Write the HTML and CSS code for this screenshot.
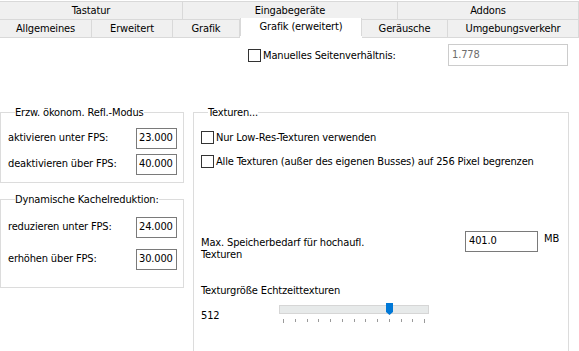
FILE: index.html
```html
<!DOCTYPE html>
<html lang="de">
  <head>
    <meta charset="UTF-8" />
    <title>Grafik (erweitert)</title>
    <link rel="stylesheet" href="styles.css">
  </head>
  <body>
    <div class="tabs">
      <div class="tab-row">
        <div class="tab w183">Tastatur</div>
        <div class="tab w215">Eingabegeräte</div>
        <div class="tab w181">Addons</div>
      </div>
      <div class="tab-row">
        <div class="tab w92">Allgemeines</div>
        <div class="tab w81">Erweitert</div>
        <div class="tab w67">Grafik</div>
        <div class="tab w122 active">Grafik (erweitert)</div>
        <div class="tab w86">Geräusche</div>
        <div class="tab w131">Umgebungsverkehr</div>
      </div>
    </div>

    <div class="page">
      <div class="top-row">
        <label class="check"><span class="box"></span>Manuelles Seitenverhältnis:</label>
        <div class="input disabled wide">1.778</div>
      </div>

      <div class="columns">
        <div class="left">
          <fieldset class="group refl">
            <legend>Erzw. ökonom. Refl.-Modus</legend>
            <div class="field">
              <span>aktivieren unter FPS:</span>
              <div class="input num">23.000</div>
            </div>
            <div class="field">
              <span>deaktivieren über FPS:</span>
              <div class="input num">40.000</div>
            </div>
          </fieldset>

          <fieldset class="group tiles">
            <legend>Dynamische Kachelreduktion:</legend>
            <div class="field">
              <span>reduzieren unter FPS:</span>
              <div class="input num">24.000</div>
            </div>
            <div class="field">
              <span>erhöhen über FPS:</span>
              <div class="input num">30.000</div>
            </div>
          </fieldset>
        </div>

        <fieldset class="group textures">
          <legend>Texturen...</legend>
          <label class="check"><span class="box"></span>Nur Low-Res-Texturen verwenden</label>
          <label class="check"><span class="box"></span>Alle Texturen (außer des eigenen Busses) auf 256 Pixel begrenzen</label>

          <div class="memory">
            <span class="memory-label">Max. Speicherbedarf für hochaufl.<br>Texturen</span>
            <div class="input mem">401.0</div>
            <span class="unit">MB</span>
          </div>

          <div class="realtime">Texturgröße Echtzeittexturen</div>
          <div class="slider-row">
            <span class="value">512</span>
            <div class="slider">
              <div class="track"></div>
              <div class="thumb"></div>
              <div class="ticks">
                <i class="long"></i><i></i><i></i><i></i><i></i><i></i><i></i><i></i><i></i><i></i><i></i><i></i><i class="long"></i>
              </div>
            </div>
          </div>
        </fieldset>
      </div>
    </div>
  </body>
</html>
```

FILE: styles.css
```css
body {
  margin: 0;
  background: #fff;
  font-family: "DejaVu Sans Condensed", "Liberation Sans", sans-serif;
  font-size: 11px;
  letter-spacing: -0.15px;
  color: #000;
  overflow: hidden;
}
.tabs {
  padding-top: 1px;
  background: #fff;
}
.tab-row {
  display: flex;
}
.tab {
  flex: none;
  box-sizing: border-box;
  height: 19px;
  line-height: 17px;
  text-align: center;
  background: #f0f0f0;
  border: 1px solid #d9d9d9;
  border-left: none;
  color: #000;
  white-space: nowrap;
}
.tab-row + .tab-row .tab {
  border-top: none;
  height: 18px;
}
.tab.active {
  position: relative;
  margin-top: -2px;
  height: 21px;
  line-height: 18px;
  background: #fff;
  border: 1px solid #d9d9d9;
  border-bottom: none;
  z-index: 1;
}
.w183 { width: 183px; }
.w215 { width: 215px; }
.w181 { width: 181px; }
.w92 { width: 92px; }
.w81 { width: 81px; }
.w67 { width: 67px; }
.w122 { width: 122px; }
.w86 { width: 86px; }
.w131 { width: 131px; }

.page {
  height: 313px;
}
.top-row {
  display: flex;
  align-items: center;
  padding: 6px 11px 0 248px;
}
.check {
  display: flex;
  align-items: center;
  white-space: nowrap;
}
.box {
  box-sizing: border-box;
  width: 13px;
  height: 13px;
  border: 1px solid #333;
  background: #fff;
  margin-right: 2px;
}
.input {
  box-sizing: border-box;
  border: 1px solid #7a7a7a;
  background: #fff;
  padding: 0 3px;
  line-height: 18px;
}
.input.disabled {
  border-color: #ccc;
  color: #6d6d6d;
}
.wide {
  width: 120px;
  height: 22px;
  line-height: 20px;
  margin-left: auto;
}
.num {
  width: 41px;
  height: 21px;
  padding: 0 2px;
}

.columns {
  display: flex;
  margin-top: 40px;
}
.left {
  width: 184px;
}
.group {
  box-sizing: border-box;
  margin: 0;
  border: 1px solid #dcdcdc;
  min-width: 0;
}
.group legend {
  padding: 0;
  margin-left: 7px;
  line-height: 13px;
}
.refl {
  width: 184px;
  height: 77px;
  padding: 9px 6px 0 7px;
}
.tiles {
  width: 184px;
  height: 95px;
  margin-top: 10px;
  padding: 11px 6px 0 7px;
}
.field {
  display: flex;
  align-items: center;
  justify-content: space-between;
  margin-bottom: 5px;
}
.field span {
  margin-top: -3px;
}
.tiles .field {
  margin-bottom: 11px;
}
.textures {
  width: 376px;
  height: 250px;
  margin-left: 9px;
  padding: 12px 6px 0 7px;
}
.textures .check + .check {
  margin-top: 11px;
}
.memory {
  display: flex;
  align-items: flex-start;
  margin-top: 63px;
  line-height: 12px;
}
.memory-label {
  width: 264px;
  margin-top: 6px;
}
.mem {
  width: 73px;
  height: 21px;
}
.unit {
  margin-left: 6px;
  margin-top: 2px;
}
.realtime {
  margin-top: 23px;
}
.slider-row {
  display: flex;
  margin-top: 6px;
}
.value {
  width: 78px;
  margin-top: 6px;
}
.slider {
  position: relative;
  width: 150px;
  height: 22px;
}
.track {
  box-sizing: border-box;
  margin-top: 2px;
  height: 9px;
  background: #e7eaea;
  border: 1px solid #d6d6d6;
}
.thumb {
  position: absolute;
  left: 107px;
  top: 0;
  width: 7px;
  height: 12px;
  background: #0078d7;
  clip-path: polygon(0 0, 100% 0, 100% 75%, 50% 100%, 0 75%);
}
.ticks {
  display: flex;
  justify-content: space-between;
  padding: 0 4px;
  margin-top: 5px;
}
.ticks i {
  width: 1px;
  height: 3px;
  background: #9a9a9a;
}
.ticks i.long {
  height: 4px;
}
```
